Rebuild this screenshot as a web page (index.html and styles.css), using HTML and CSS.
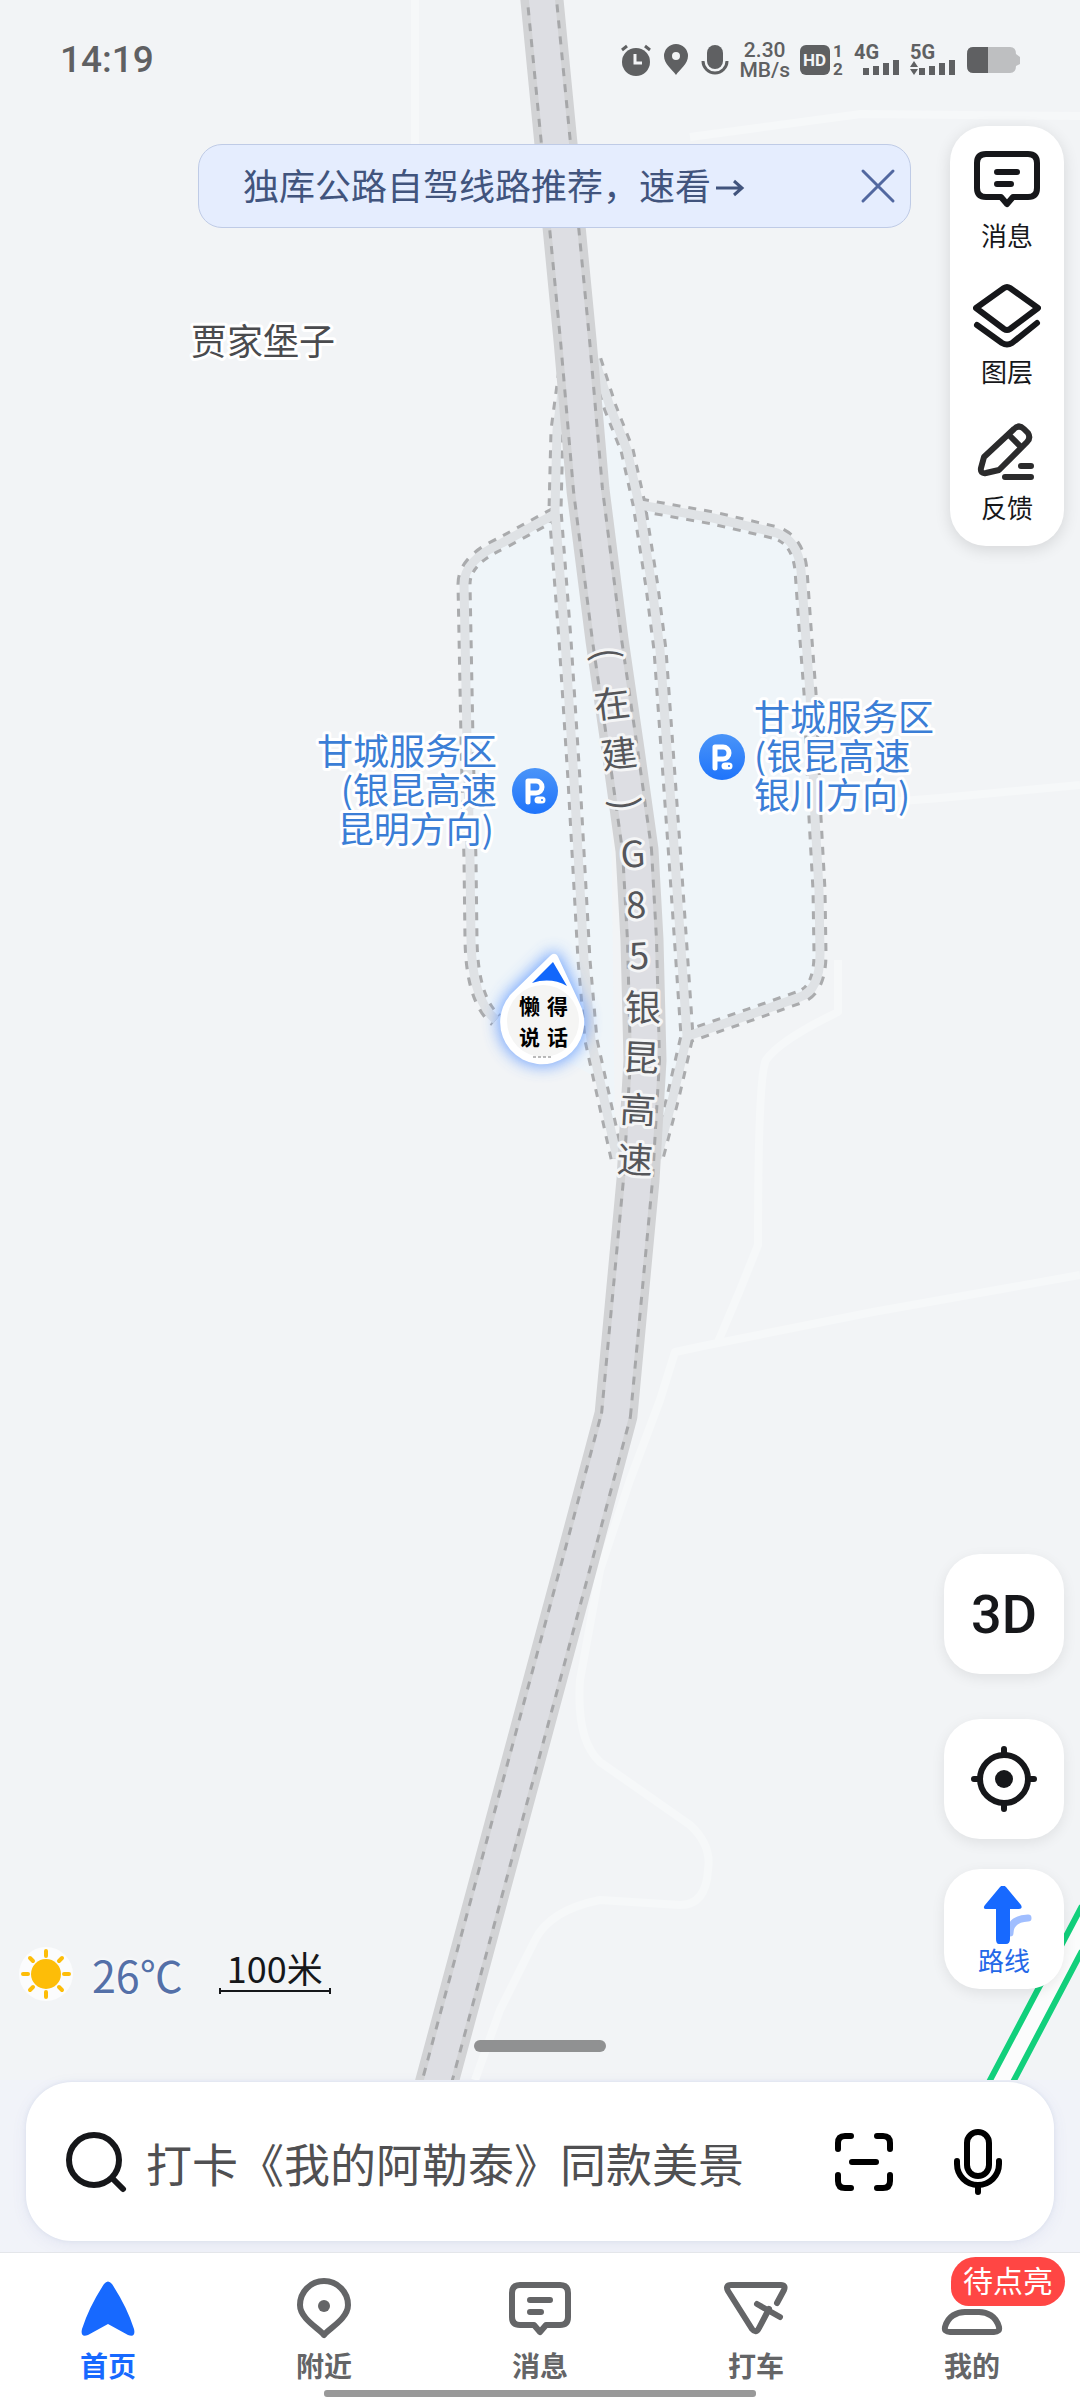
FILE: index.html
```html
<!DOCTYPE html>
<html lang="zh-CN">
<head>
  <meta charset="UTF-8">
  <title>地图</title>
  <meta name="viewport" content="width=device-width, initial-scale=1.0">
  <link rel="stylesheet" href="styles.css">
</head>
<body>
  <main class="map">
    <svg class="map-canvas" viewBox="0 0 1080 2080" preserveAspectRatio="xMidYMin slice">
      <defs>
        <path id="highway" d="M541 -10 L556 144 L575 340 L588 490 L607 640 L623 750 L637 850 L642 940 L645 1060 L638 1180 L616 1415 L576 1565 L432 2100"/>
        <path id="ramps" d="M567 355 L557 430 L555 510 L565 640 L574 780 L584 960 L591 1040 L617 1158 M595 360 L610 407 L627 450 L639 504 L652 587 L660 650 L675 860 L687 1036 L673 1097 L657 1158"/>
        <path id="loops" d="M555 514 L502 543 Q464 560 464 584 L467 740 L470 860 L471 940 Q472 1000 496 1020 M640 505 L713 518 L777 533 Q798 541 801 570 L805 627 L810 693 L815 818 L819 890 L820 954 Q820 990 800 997 L749 1015 L688 1036"/>
      </defs>

      <!-- service areas -->
      <path class="area" d="M555 514 L502 543 Q464 560 464 584 L471 940 Q472 1000 496 1020 L600 1080 L615 1150 L610 700 L560 440Z"/>
      <path class="area" d="M600 370 L640 505 L777 533 Q798 541 801 570 L820 954 Q820 990 800 997 L688 1036 L660 1140 L620 700Z"/>

      <!-- minor roads -->
      <g class="lane">
        <path d="M415 0 V150"/>
        <path d="M690 137 L757 128 L861 114 L1080 116"/>
        <path d="M850 805 L940 798 L1080 785"/>
        <path d="M838 960 V1012 Q780 1040 766 1060 Q758 1075 758 1245 L740 1290 L718 1342"/>
        <path d="M1080 1275 L873 1312 L708 1345 L675 1352 L660 1400 L630 1480 L600 1570 L580 1680 Q576 1740 600 1762 L690 1825 Q712 1845 708 1870 Q706 1905 680 1905 L600 1900 Q550 1910 535 1940 L500 2010 L475 2080"/>
      </g>

      <!-- route at the right edge -->
      <path class="route-fill" d="M988 2080 L1080 1910 V1955 L1013 2080Z"/>
      <path class="route-line" d="M988 2084 L1082 1906 M1012 2084 L1082 1951"/>

      <use href="#ramps" class="ramp-edge"/>
      <use href="#loops" class="ramp-edge"/>
      <use href="#ramps" class="ramp"/>
      <use href="#loops" class="ramp"/>
      <use href="#highway" class="highway-side"/>
      <use href="#highway" class="highway-edge"/>
      <use href="#highway" class="highway"/>

      <g class="road-name">
        <text transform="translate(606 654) rotate(83)" dy="12">(</text>
        <text transform="translate(612 704) rotate(-7)" dy="13">在</text>
        <text transform="translate(619 754) rotate(-7)" dy="13">建</text>
        <text transform="translate(625 804) rotate(83)" dy="12">)</text>
        <text transform="translate(633 854) rotate(-3)" dy="13">G</text>
        <text transform="translate(636 905) rotate(-3)" dy="13">8</text>
        <text transform="translate(639 956) rotate(-3)" dy="13">5</text>
        <text transform="translate(643 1008)" dy="13">银</text>
        <text transform="translate(641 1058) rotate(3)" dy="13">昆</text>
        <text transform="translate(638 1110) rotate(3)" dy="13">高</text>
        <text transform="translate(635 1160) rotate(3)" dy="13">速</text>
      </g>

      <text class="place" x="191" y="355">贾家堡子</text>
      <g class="poi poi-left">
        <text x="497" y="765">甘城服务区</text>
        <text x="497" y="804">(银昆高速</text>
        <text x="494" y="843">昆明方向)</text>
      </g>
      <g class="poi">
        <text x="754" y="731">甘城服务区</text>
        <text x="754" y="770">(银昆高速</text>
        <text x="754" y="809">银川方向)</text>
      </g>

      <defs>
        <linearGradient id="parkFill" x1="0" y1="0" x2="0" y2="1">
          <stop offset="0" stop-color="#4a94f8"/>
          <stop offset="1" stop-color="#1f74fb"/>
        </linearGradient>
        <g id="parking">
          <circle r="23" fill="url(#parkFill)"/>
          <path d="M-7 11 V-10 H1 A6 6 0 0 1 1 2 H-6" fill="none" stroke="#fff" stroke-width="5" stroke-linecap="round" stroke-linejoin="round"/>
          <path d="M3 9 H7" stroke="#fff" stroke-width="7" stroke-linecap="round"/>
          <circle cx="7" cy="9" r="1" fill="#1f74fb"/>
        </g>
        <filter id="glow" x="-50%" y="-50%" width="200%" height="200%">
          <feGaussianBlur stdDeviation="8"/>
        </filter>
        <path id="drop" d="M555 954 Q557 954 559 959 L579 1002 A42 42 0 1 1 511 994 L550 956 Q553 953 555 954Z"/>
      </defs>
      <use href="#parking" x="535" y="791"/>
      <use href="#parking" x="722" y="757"/>

      <!-- own position -->
      <use href="#drop" fill="#5a95ff" stroke="#5a95ff" stroke-width="4" filter="url(#glow)" opacity="0.85"/>
      <use href="#drop" fill="#fff"/>
      <circle cx="543" cy="1021" r="36" fill="#f5f5f4"/>
      <path d="M553 962 L532 983 Q551 977 567 986Z" fill="#1267fb"/>
      <path d="M533 1057 H552" stroke="#777" stroke-width="1" stroke-dasharray="3 2"/>
      <g class="marker-text">
        <text x="519 547" y="1014">懒得</text>
        <text x="519 547" y="1045">说话</text>
      </g>
    </svg>

    <header class="status">
      <span class="clock">14:19</span>
      <div class="status-icons">
        <div class="status-apps">
          <svg width="30" height="32" viewBox="0 0 30 32">
            <circle cx="15" cy="18" r="14" fill="#5f6062"/>
            <path d="M1 6 L6 2 M29 6 L24 2" stroke="#5f6062" stroke-width="3"/>
            <path d="M14 10 V19 H21" fill="none" stroke="#f3f4f6" stroke-width="3"/>
          </svg>
          <svg width="24" height="32" viewBox="0 0 24 32">
            <path d="M12 31 C8 25 0 20 0 12 A12 12 0 0 1 24 12 C24 20 16 25 12 31Z M12 8 A4 4 0 1 0 12 16 A4 4 0 1 0 12 8Z" fill="#5f6062" fill-rule="evenodd"/>
          </svg>
          <svg width="28" height="32" viewBox="0 0 28 32">
            <rect x="6" y="1" width="16" height="24" rx="8" fill="#5f6062"/>
            <path d="M2 17 A12 12 0 0 0 26 17" fill="none" stroke="#5f6062" stroke-width="3"/>
          </svg>
        </div>
        <span class="speed"><b>2.30</b><b>MB/s</b></span>
        <svg width="44" height="46" viewBox="0 -6 44 46">
          <rect x="0" y="2" width="30" height="30" rx="6" fill="#5f6062"/>
          <text class="tiny light" x="3" y="23">HD</text>
          <text class="tiny" x="33" y="14">1</text>
          <text class="tiny" x="33" y="32">2</text>
        </svg>
        <svg width="46" height="46" viewBox="0 -6 46 46">
          <text class="net" x="0" y="16">4G</text>
          <path d="M12 32 V25 M22 32 V23 M32 32 V20 M42 32 V17" stroke="#5f6062" stroke-width="6"/>
        </svg>
        <svg width="46" height="46" viewBox="0 -6 46 46">
          <text class="net" x="0" y="16">5G</text>
          <path d="M0 24 L4 18 L8 24Z M0 26 L4 32 L8 26Z" fill="#5f6062"/>
          <path d="M12 32 V25 M22 32 V23 M32 32 V20 M42 32 V17" stroke="#5f6062" stroke-width="6"/>
        </svg>
        <svg width="54" height="28" viewBox="0 0 54 28">
          <path d="M7 1 H44 Q50 1 50 8 L54 11 V18 L50 20 Q50 27 44 27 H7 Q1 27 1 20 V8 Q1 1 7 1Z" fill="#bebfc1"/>
          <path d="M22 1 H7 Q1 1 1 8 V20 Q1 27 7 27 H22Z" fill="#5f6062"/>
        </svg>
      </div>
    </header>

    <div class="top">
      <div class="notice">
        <a href="#" class="notice-link">独库公路自驾线路推荐，速看<svg width="30" height="24" viewBox="0 0 30 24"><path d="M1 12 H27 M19 5 L27 12 L19 19" fill="none" stroke="#41547d" stroke-width="3"/></svg></a>
        <button class="notice-close" aria-label="关闭">
          <svg width="36" height="36" viewBox="0 0 36 36"><path d="M3 3 L33 33 M33 3 L3 33" stroke="#5268a0" stroke-width="3" stroke-linecap="round"/></svg>
        </button>
      </div>
      <div class="tools">
        <button class="tool">
          <svg width="68" height="68" viewBox="0 0 68 68">
            <path d="M13 8 H55 Q64 8 64 17 V42 Q64 51 55 51 H40 L34 58 L28 51 H13 Q4 51 4 42 V17 Q4 8 13 8Z"/>
            <path d="M24 26 H44 M24 38 H38"/>
          </svg>
          消息
        </button>
        <button class="tool">
          <svg width="68" height="68" viewBox="0 0 68 68">
            <path d="M31 6 Q34 4 37 6 L65 26 L37 47 Q34 49 31 47 L3 26Z"/>
            <path d="M4 43 L29 61 Q34 64 39 61 L64 41"/>
          </svg>
          图层
        </button>
        <button class="tool">
          <svg class="dark" width="68" height="68" viewBox="0 0 68 68">
            <path d="M41 11 Q46 6 51 11 L55 15 Q58 20 54 24 L26 52 L13 55 Q7 56 8 50 L11 39Z"/>
            <path d="M37 18 L48 29 M48 48 H58 M32 59 H58"/>
          </svg>
          反馈
        </button>
      </div>
    </div>

    <div class="bottom">
      <div class="info">
        <svg width="60" height="60" viewBox="0 0 60 60">
          <circle cx="30" cy="30" r="27" fill="#fbfcfd"/>
          <circle cx="30" cy="30" r="15" fill="#fdbd08"/>
          <path d="M30 7 V12 M30 48 V53 M7 30 H12 M48 30 H53 M14 14 L17 17 M46 14 L43 17 M14 46 L17 43 M46 46 L43 43" stroke="#fdbd08" stroke-width="4" stroke-linecap="round"/>
        </svg>
        <span class="temp">26℃</span>
        <span class="scale">100米</span>
      </div>
      <div class="floats">
        <button class="float view-mode">3D</button>
        <button class="float locate" aria-label="定位">
          <svg width="68" height="68" viewBox="0 0 68 68">
            <circle cx="34" cy="34" r="24" fill="none" stroke="#16171a" stroke-width="6"/>
            <circle cx="34" cy="34" r="9" fill="#16171a"/>
            <path d="M34 4 V10 M34 58 V64 M4 34 H10 M58 34 H64" stroke="#16171a" stroke-width="6" stroke-linecap="round"/>
          </svg>
        </button>
        <button class="float route">
          <svg width="60" height="60" viewBox="0 0 60 60">
            <path d="M36 47 Q36 33 54 32" fill="none" stroke="#a0beff" stroke-width="7" stroke-linecap="round"/>
            <path d="M26 1 Q29 -2 32 1 L47 19 Q49 23 45 23 H36 V53 Q36 58 32 58 H25 Q22 58 22 53 V23 H13 Q8 23 11 19Z" fill="#1769ff"/>
          </svg>
          路线
        </button>
      </div>
    </div>
    <div class="grip"></div>
  </main>

  <section class="search-wrap">
    <form class="search">
      <svg width="62" height="62" viewBox="0 0 62 62">
        <circle cx="28" cy="29" r="25" fill="none" stroke="#16171a" stroke-width="6"/>
        <path d="M47 48 L57 58" stroke="#16171a" stroke-width="6" stroke-linecap="round"/>
      </svg>
      <input type="text" aria-label="搜索" placeholder="打卡《我的阿勒泰》同款美景">
      <button type="button" aria-label="扫一扫">
        <svg width="60" height="60" viewBox="0 0 60 60" fill="none" stroke="#000" stroke-width="6" stroke-linecap="round">
          <path d="M4 17 V11 Q4 4 11 4 H17 M43 4 H49 Q56 4 56 11 V17 M56 43 V49 Q56 56 49 56 H43 M17 56 H11 Q4 56 4 49 V43 M18 30 H42"/>
        </svg>
      </button>
      <button type="button" aria-label="语音">
        <svg width="48" height="68" viewBox="0 0 48 68" fill="none" stroke="#000" stroke-width="6" stroke-linecap="round">
          <rect x="13" y="4" width="22" height="44" rx="11"/>
          <path d="M3 33 V36 A21 21 0 0 0 45 36 V33 M24 58 V64"/>
        </svg>
      </button>
    </form>
  </section>

  <nav class="tabs">
    <a href="#" class="tab active">
      <svg width="64" height="64" viewBox="0 0 64 64"><path d="M28 8 Q32 3 36 8 Q51 31 58 53 Q60 62 52 59 L32 48 L12 59 Q4 62 6 53 Q13 31 28 8Z" fill="#1769ff"/></svg>
      首页
    </a>
    <a href="#" class="tab">
      <svg width="64" height="64" viewBox="0 0 64 64">
        <path d="M32 59 C28 53 8 43 8 29 A24 24 0 0 1 56 29 C56 43 36 53 32 59Z"/>
        <circle class="solid" cx="32" cy="30" r="6"/>
      </svg>
      附近
    </a>
    <a href="#" class="tab">
      <svg width="64" height="64" viewBox="0 0 64 64">
        <path d="M12 9 H52 Q60 9 60 17 V41 Q60 49 52 49 H38 L32 56 L26 49 H12 Q4 49 4 41 V17 Q4 9 12 9Z"/>
        <path d="M22 24 H42 M22 36 H33"/>
      </svg>
      消息
    </a>
    <a href="#" class="tab">
      <svg width="64" height="64" viewBox="0 0 64 64">
        <path d="M53 27 L60 14 Q62 9 57 9 H7 Q1 9 4 15 L28 53 Q32 58 35 52 L45 33"/>
        <path d="M33 28 L56 41"/>
      </svg>
      打车
    </a>
    <a href="#" class="tab">
      <svg width="64" height="64" viewBox="0 0 64 64">
        <path d="M10 56 H54 Q60 56 59 51 C56 40 47 36 39 36 H25 C17 36 8 40 5 51 Q4 56 10 56Z"/>
      </svg>
      我的
      <span class="badge">待点亮</span>
    </a>
  </nav>
  <div class="home-bar"></div>
</body>
</html>
```

FILE: styles.css
```css
* { box-sizing: border-box; }
body {
  margin: 0; min-height: 100vh;
  display: flex; flex-direction: column;
  background: #f2f4f6; color: #16171a;
  font-family: Roboto, "Noto Sans CJK SC", sans-serif;
}
button { font: inherit; color: inherit; background: none; border: none; padding: 0; cursor: pointer; }
a { color: inherit; text-decoration: none; }
svg { display: block; flex: none; }

/* map drawing */
.map { position: relative; flex: 1; display: flex; flex-direction: column; isolation: isolate; }
.map-canvas { position: absolute; inset: 0; width: 100%; height: 100%; z-index: -1; }
.map-canvas path, .map-canvas use { stroke-linejoin: round; }
.area { fill: #eff5f9; }
.lane { fill: none; stroke: #f6f8f9; stroke-width: 8; }
.route-fill { fill: #fbfcfc; }
.route-line { fill: none; stroke: #12d07c; stroke-width: 6; }
.ramp-edge { fill: none; stroke: #aaabad; stroke-width: 15; stroke-dasharray: 8 8; }
.ramp { fill: none; stroke: #dfe2e5; stroke-width: 9; }
.highway-side { fill: none; stroke: #d2d3d5; stroke-width: 43; }
.highway-edge { fill: none; stroke: #a6a7a9; stroke-width: 32; stroke-dasharray: 8 8; }
.highway { fill: none; stroke: #dddee3; stroke-width: 26; }
.road-name, .place, .poi {
  font-family: "Noto Sans CJK SC", sans-serif; font-size: 36px;
  paint-order: stroke; stroke: #fff; stroke-width: 6px; stroke-linejoin: round;
}
.road-name { fill: #55565a; text-anchor: middle; stroke: #f4f5f6; }
.place { fill: #4a4b4e; }
.poi { fill: #3b7ed6; }
.poi-left { text-anchor: end; }
.marker-text { font-family: "Noto Sans CJK SC", sans-serif; font-size: 21px; font-weight: 700; fill: #000; }

/* status bar */
.status {
  height: 126px; padding: 36px 60px 42px;
  display: flex; justify-content: space-between; align-items: center; color: #5f6062;
}
.clock { font-size: 37px; line-height: 48px; font-weight: 500; }
.status-icons { display: flex; align-items: center; gap: 10px; }
.status-apps { display: flex; gap: 13px; }
.speed { display: flex; flex-direction: column; align-items: center; font-size: 21px; line-height: 20px; }
.speed b { font-weight: 500; }
.tiny { font-size: 17px; font-weight: 700; fill: #5f6062; }
.light { fill: #f3f4f6; }
.net { font-size: 20px; font-weight: 700; fill: #5f6062; }

/* notice and tool panel */
.top { display: flex; align-items: flex-start; gap: 39px; padding: 0 16px 0 198px; }
.notice {
  flex: 1; height: 84px; margin-top: 18px; padding: 0 14px 0 44px;
  display: flex; align-items: center; justify-content: space-between;
  background: #e5edfe; border: 1px solid #bfcbe6; border-radius: 24px;
}
.notice-link { display: flex; align-items: center; gap: 4px; padding-top: 4px; font-size: 36px; line-height: 48px; color: #41547d; white-space: nowrap; }
.tools {
  width: 114px; padding: 20px 0 19px; display: flex; flex-direction: column; gap: 27px;
  background: #fff; border-radius: 36px; box-shadow: 0 4px 16px rgba(0, 0, 0, 0.12);
}
.tool { display: flex; flex-direction: column; align-items: center; gap: 5px; font-size: 26px; line-height: 36px; }
.tool svg { fill: none; stroke: #16171a; stroke-width: 6; stroke-linecap: round; stroke-linejoin: round; }
.tool .dark { stroke: #2b2b2c; }

/* lower part of the map */
.bottom { margin-top: auto; display: flex; justify-content: space-between; align-items: flex-end; padding: 0 16px; }
.info { display: flex; align-items: center; height: 60px; }
.temp { margin-left: 16px; font-family: "Noto Sans CJK SC", sans-serif; font-size: 43px; line-height: 60px; color: #5470a8; text-shadow: 0 0 4px #fff; }
.scale {
  position: relative; margin: 0 0 12px 36px; padding: 0 8px; text-align: center;
  font-family: "Noto Sans CJK SC", sans-serif; font-size: 36px; line-height: 46px; border-bottom: 2px solid #16171a;
}
.scale::after { content: ""; position: absolute; left: 0; right: 0; bottom: -4px; height: 6px; border: solid #16171a; border-width: 0 2px; }
.floats { display: flex; flex-direction: column; padding-bottom: 15px; }
.float {
  width: 120px; height: 120px; border-radius: 36px; background: #fff;
  display: flex; flex-direction: column; align-items: center; justify-content: center;
  box-shadow: 0 4px 14px rgba(0, 0, 0, 0.08);
}
.view-mode { font-size: 54px; font-weight: 500; }
.locate { margin-top: 45px; }
.route { margin-top: 30px; padding-top: 6px; font-size: 26px; line-height: 32px; color: #2468e8; }
.grip { width: 132px; height: 12px; margin: 36px auto 28px; border-radius: 6px; background: #909192; }

/* search */
.search-wrap { padding: 2px 26px 11px; background: #f1f3f9; }
.search {
  height: 159px; padding: 0 52px 0 40px; display: flex; align-items: center;
  background: #fff; border-radius: 46px; box-shadow: 0 0 4px #d9dfec, 0 4px 16px rgba(80, 90, 160, 0.08);
}
.search input {
  flex: 1; min-width: 0; height: 70px; margin: 0 16px 0 18px; padding: 0; border: none; outline: none; background: none;
  font-family: "Noto Sans CJK SC", sans-serif; font-size: 46px; color: #16171a;
}
.search input::placeholder { color: #505052; opacity: 1; }
.search button + button { margin-left: 60px; }

/* bottom tabs */
.tabs { display: grid; grid-template-columns: repeat(5, 1fr); height: 138px; background: #fff; border-top: 1px solid #e4e6ea; }
.tab {
  position: relative; padding-top: 23px; display: flex; flex-direction: column; align-items: center; gap: 10px;
  font-size: 28px; line-height: 36px; font-weight: 700; color: #646567;
}
.tab.active { color: #1769ff; }
.tab svg { fill: none; stroke: #646567; stroke-width: 6; stroke-linecap: round; stroke-linejoin: round; }
.tab.active svg { stroke: none; }
.tab .solid { fill: #646567; stroke: none; }
.badge {
  position: absolute; top: 4px; right: 15px; padding: 0 12px;
  font-size: 30px; line-height: 49px; font-weight: 400; color: #fff;
  background: #ff4644; border-radius: 25px 25px 25px 18px;
}
.home-bar { height: 10px; background: #fff; }
.home-bar::before { content: ""; display: block; width: 40%; height: 7px; margin: 0 auto; border-radius: 3px; background: #999; }
```
